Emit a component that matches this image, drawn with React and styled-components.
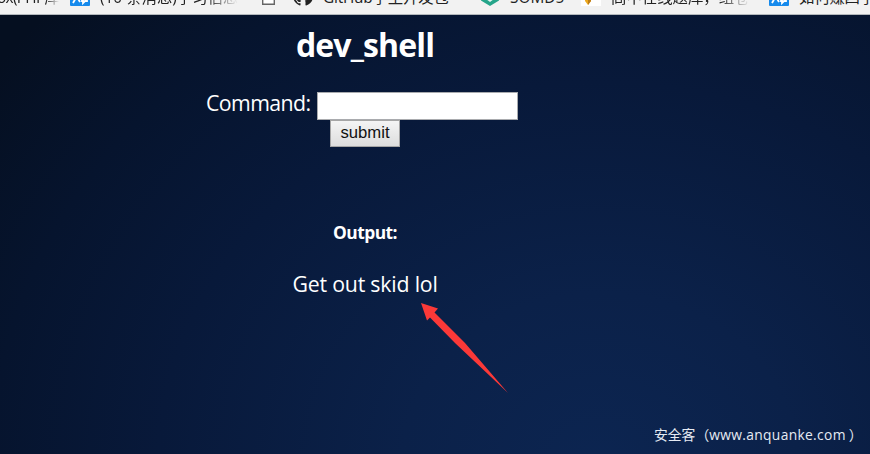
import React from "react";
import styled, { createGlobalStyle } from "styled-components";

const GlobalStyle = createGlobalStyle`
  body { margin: 0; overflow: hidden; }
  * { box-sizing: border-box; }
`;

const uiFont = `"Open Sans", "Noto Sans", "Noto Sans CJK SC", sans-serif`;

const Page = styled.div`
  position: relative;
  display: flex;
  flex-direction: column;
  width: 870px;
  height: 454px;
  overflow: hidden;
  font-family: ${uiFont};
`;

const BookmarkBar = styled.nav`
  display: flex;
  align-items: flex-end;
  flex: none;
  height: 15px;
  padding-bottom: 8px;
  overflow: hidden;
  background: #f2f2f2;
  border-bottom: 1px solid #b3b8bc;
`;

const Bookmark = styled.div`
  display: flex;
  align-items: flex-end;
  flex: none;
  width: ${(p) => p.$width}px;
  height: 24px;
  margin-left: ${(p) => p.$shift || 0}px;
`;

const BookmarkIcon = styled.svg`
  display: block;
  flex: none;
  width: 20px;
  height: 20px;
  margin-right: 10px;
`;

const BookmarkLabel = styled.span`
  flex: none;
  height: 24px;
  margin-bottom: -4px;
  line-height: 24px;
  font-size: 15.4px;
  letter-spacing: ${(p) => p.$spacing || 0}px;
  white-space: nowrap;
  color: #222;
  ${(p) =>
    p.$fade &&
    `-webkit-mask-image: linear-gradient(90deg, #000 78%, transparent 100%);
     mask-image: linear-gradient(90deg, #000 78%, transparent 100%);`}
`;

const Screen = styled.main`
  display: flex;
  flex-direction: column;
  align-items: center;
  flex: 1;
  padding-right: 140px;
  color: #fff;
  background: radial-gradient(
    ellipse 760px 660px at 600px 450px,
    #0c2551 0%,
    #0b2149 26%,
    #08193a 58%,
    #06142e 80%,
    #050f20 100%
  );
`;

const Title = styled.h1`
  margin: 8px 0 0;
  font-size: 32px;
  line-height: 44px;
  font-weight: 700;
  letter-spacing: -0.85px;
`;

const CommandForm = styled.form`
  display: flex;
  flex-direction: column;
  align-items: center;
  margin-top: 25px;
`;

const CommandRow = styled.label`
  display: flex;
  align-items: center;
  height: 28px;
  padding-right: 6px;
  gap: 6px;
  font-size: 21.3px;
`;

const CommandLabel = styled.span`
  width: 105px;
  line-height: 26px;
  margin-top: -6px;
  white-space: nowrap;
  letter-spacing: -0.6px;
`;

const CommandInput = styled.input`
  width: 201px;
  height: 28px;
  padding: 0 4px;
  border: 1px solid #a9abae;
  border-radius: 0;
  outline: 0;
  background: #fff;
  font: 16px "Liberation Sans", sans-serif;
`;

const SubmitButton = styled.button`
  width: 70px;
  height: 27px;
  padding: 0 0 2px;
  border: 1px solid #a5a5a5;
  border-radius: 0;
  background: linear-gradient(#f4f4f4, #dddddd);
  color: #111;
  font: 16.7px/22px "Liberation Sans", sans-serif;
`;

const OutputHeading = styled.h2`
  margin: 73px 0 0;
  font-size: 17.4px;
  line-height: 24px;
  font-weight: 700;
  letter-spacing: -0.55px;
`;

const OutputText = styled.p`
  margin: 25px 0 0;
  font-size: 21.3px;
  line-height: 30px;
  letter-spacing: -0.2px;
`;

const Arrow = styled.svg`
  position: absolute;
  left: 418px;
  top: 300px;
  width: 94px;
  height: 96px;
`;

const Watermark = styled.div`
  position: absolute;
  left: 654px;
  top: 425px;
  display: flex;
  font-size: 13.8px;
  line-height: 20px;
  white-space: nowrap;
  color: #e6ebf3;
`;

const WatermarkUrl = styled.span`
  margin-right: 3px;
  letter-spacing: 0.34px;
`;

function ZhihuIcon() {
  return (
    <BookmarkIcon viewBox="0 0 20 20">
      <rect width="20" height="20" rx="1" fill="#168aec" />
      <path
        d="M5 4h5M3 10h7M7 4v6l-4 7M7 11l3 5M12 5h5v10h-2l-2 2v-2h-1z"
        fill="none"
        stroke="#fff"
        strokeWidth="1.8"
      />
    </BookmarkIcon>
  );
}

function PageIcon() {
  return (
    <BookmarkIcon viewBox="0 0 20 20">
      <path d="M4.700 1h7l4.600 4v13.300H4.700z" fill="#fff" stroke="#666" strokeWidth="1.4" />
    </BookmarkIcon>
  );
}

function GitHubIcon() {
  return (
    <BookmarkIcon viewBox="0 0 16 16">
      <path
        fill="#222"
        d="M8 0C3.58 0 0 3.58 0 8c0 3.54 2.29 6.53 5.47 7.59.4.07.55-.17.55-.38 0-.19-.01-.82-.01-1.49-2.01.37-2.53-.49-2.69-.94-.09-.23-.48-.94-.82-1.13-.28-.15-.68-.52-.01-.53.63-.01 1.08.58 1.23.82.72 1.21 1.87.87 2.33.66.07-.52.28-.87.51-1.07-1.78-.2-3.64-.89-3.64-3.95 0-.87.31-1.59.82-2.15-.08-.2-.36-1.02.08-2.12 0 0 .67-.21 2.2.82a7.6 7.6 0 0 1 4 0c1.53-1.04 2.2-.82 2.2-.82.44 1.1.16 1.92.08 2.12.51.56.82 1.27.82 2.15 0 3.07-1.87 3.75-3.65 3.95.29.25.54.73.54 1.48 0 1.07-.01 1.93-.01 2.2 0 .21.15.46.55.38A8.01 8.01 0 0 0 16 8c0-4.42-3.58-8-8-8z"
      />
    </BookmarkIcon>
  );
}

function ShieldIcon() {
  return (
    <BookmarkIcon viewBox="0 0 20 20">
      <path d="M10 0l9 4v10.500L10 20l-9-5.500V4z" fill="#25a58a" />
      <path d="M10 4l4 2v7l-4 3-4-3V6z" fill="#e9f6f2" />
    </BookmarkIcon>
  );
}

function PencilIcon() {
  return (
    <BookmarkIcon viewBox="0 0 20 20">
      <rect width="20" height="20" fill="#fff" />
      <path d="M4 3h6v12l-3 4-3-4z" fill="#eda91d" />
      <path d="M7 3h3v12l-3 4z" fill="#bd7c18" />
    </BookmarkIcon>
  );
}

export default function App() {
  return (
    <Page>
      <GlobalStyle />
      <BookmarkBar>
        <Bookmark $width={73} $shift={-3}>
          <BookmarkLabel $fade $spacing={-0.7}>ox(PHP库</BookmarkLabel>
        </Bookmark>
        <Bookmark $width={188}>
          <ZhihuIcon />
          <BookmarkLabel $fade>(10 条消息)学习信息</BookmarkLabel>
        </Bookmark>
        <Bookmark $width={35}>
          <PageIcon />
        </Bookmark>
        <Bookmark $width={187}>
          <GitHubIcon />
          <BookmarkLabel $spacing={-0.2}>GitHub学生开发包</BookmarkLabel>
        </Bookmark>
        <Bookmark $width={101}>
          <ShieldIcon />
          <BookmarkLabel>SOMD5</BookmarkLabel>
        </Bookmark>
        <Bookmark $width={188}>
          <PencilIcon />
          <BookmarkLabel $fade>高中在线题库，组卷</BookmarkLabel>
        </Bookmark>
        <Bookmark $width={101}>
          <ZhihuIcon />
          <BookmarkLabel $spacing={-0.2}>如何赚四学</BookmarkLabel>
        </Bookmark>
      </BookmarkBar>
      <Screen>
        <Title>dev_shell</Title>
        <CommandForm onSubmit={(e) => e.preventDefault()}>
          <CommandRow>
            <CommandLabel>Command:</CommandLabel>
            <CommandInput type="text" />
          </CommandRow>
          <SubmitButton type="submit">submit</SubmitButton>
        </CommandForm>
        <OutputHeading>Output:</OutputHeading>
        <OutputText>Get out skid lol</OutputText>
      </Screen>
      <Arrow viewBox="0 0 94 96">
        <path d="M3 3L20 8.500 16.500 12.500 47 43 90 93 37 43 12 17.500 9 20.500z" fill="#fb3938" />
      </Arrow>
      <Watermark>
        安全客（<WatermarkUrl>www.anquanke.com</WatermarkUrl>）
      </Watermark>
    </Page>
  );
}
